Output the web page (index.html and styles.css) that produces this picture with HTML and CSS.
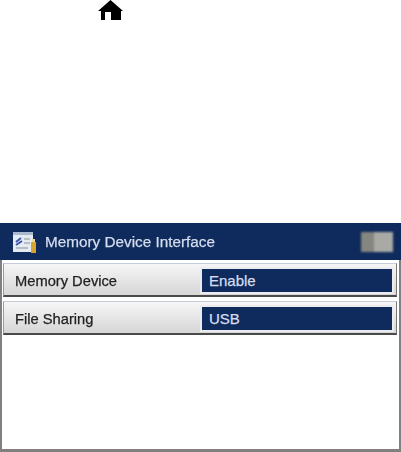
FILE: index.html
```html
<html>
    <head>
        <title>Memory Device Interface</title>
        <link rel="stylesheet" href="styles.css">
    </head>
    <body>
        <div class="intro">
            <svg class="home" viewBox="0 0 25 21" width="25" height="21">
                <path d="M12.5 0 L25 11 H23 V20 H13 V12 H7 V20 H3 V11 H0 Z" fill="#000"/>
            </svg>
        </div>
        <div class="screen">
            <div class="titlebar">
                <svg class="menu_icon" viewBox="0 0 24 24" width="24" height="24">
                    <rect x="0" y="2" width="20" height="20" fill="#e6ebf2"/>
                    <rect x="0" y="2" width="20" height="3" fill="#a9bad0"/>
                    <path d="M3 12 L8 8 M3 15 L9 11" stroke="#3c55a8" stroke-width="2"/>
                    <path d="M3 18 H15 M11 9 H17 M11 13 H17" stroke="#a5b0bd" stroke-width="1.5"/>
                    <rect x="18" y="12" width="5" height="11" fill="#d8a42c"/>
                    <rect x="19" y="9" width="3" height="3" fill="#e8d9a0"/>
                </svg>
                <span class="title">Memory Device Interface</span>
                <div class="status">
                    <div class="status_left"></div>
                    <div class="status_right"></div>
                </div>
            </div>
            <div class="rows">
                <div class="row">
                    <span class="label">Memory Device</span>
                    <span class="value">Enable</span>
                </div>
                <div class="row">
                    <span class="label">File Sharing</span>
                    <span class="value">USB</span>
                </div>
            </div>
        </div>
    </body>
</html>
```

FILE: styles.css
```css
body {
    margin: 0px;
    padding: 0px;
    background-color: white;
    font-family: "Liberation Sans", Arial, sans-serif;
    overflow: hidden;
}

.intro {
    height: 223px;
    padding-left: 98px;
    box-sizing: border-box;
}

.home {
    display: block;
}

.screen {
    height: 229px;
    box-sizing: border-box;
    border-left: 2px solid #808080;
    border-right: 2px solid #808080;
    border-bottom: 3px solid #808080;
}

.titlebar {
    height: 37px;
    margin: 0px -2px;
    padding: 0px 8px 0px 13px;
    display: flex;
    align-items: center;
    background-color: #0f2a5c;
    box-sizing: border-box;
}

.menu_icon {
    flex: none;
    filter: blur(0.6px);
}

.title {
    margin-left: 8px;
    flex: 1;
    font-size: 15.3px;
    color: #d5deee;
    -webkit-text-stroke: 0.25px #d5deee;
    filter: blur(0.4px);
}

.status {
    width: 32px;
    height: 20px;
    display: flex;
    filter: blur(0.8px);
}

.status_left {
    width: 13px;
    background-color: #85867f;
}

.status_right {
    flex: 1;
    background-color: #a9aaa5;
}

.rows {
    padding: 3px 2px 0px 1px;
    display: flex;
    flex-direction: column;
    gap: 4px;
}

.row {
    height: 34px;
    padding: 3px 2px 1px 11px;
    display: flex;
    align-items: center;
    justify-content: space-between;
    box-sizing: border-box;
    border-top: 1px solid #c4ccd8;
    border-bottom: 2px solid #4a4a4a;
    border-left: 1px solid #9a9a9a;
    border-right: 1px solid #777;
    background: linear-gradient(#f6f6f6, #d6d6d6);
}

.label {
    font-size: 14.7px;
    color: #222;
    -webkit-text-stroke: 0.25px #222;
    filter: blur(0.4px);
}

.value {
    width: 194px;
    height: 27px;
    padding-left: 7px;
    box-sizing: border-box;
    line-height: 23px;
    font-size: 15px;
    color: #d5deee;
    -webkit-text-stroke: 0.25px #d5deee;
    background-color: #0f2a5c;
    border: 2px solid #ececf0;
}
```
